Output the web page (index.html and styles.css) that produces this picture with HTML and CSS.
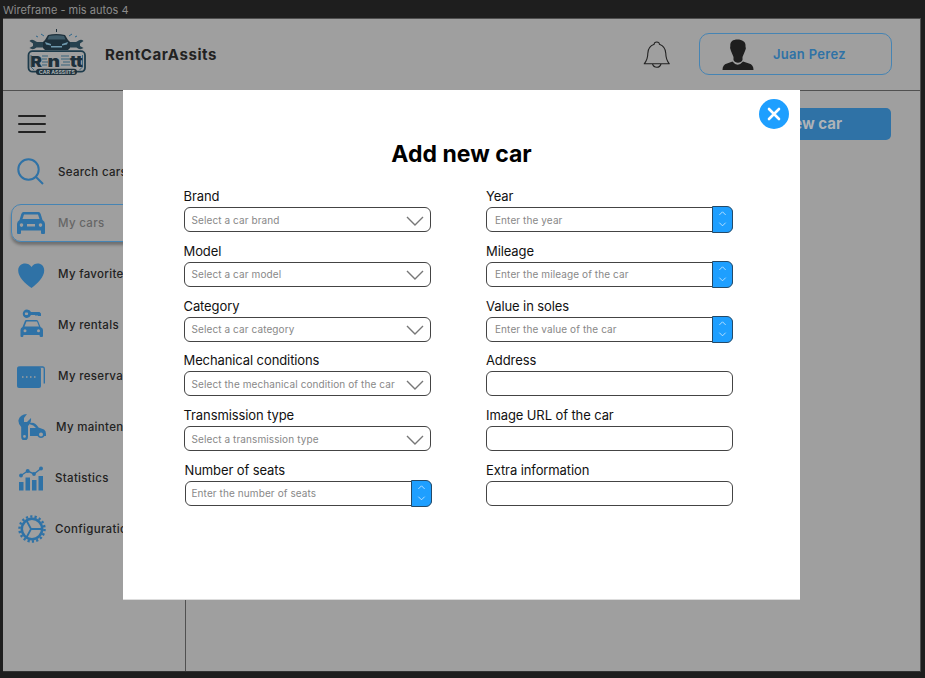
FILE: index.html
```html
<!DOCTYPE html>
<html lang="en">
<head>
<meta charset="utf-8">
<title>RentCarAssits</title>
<link rel="stylesheet" href="styles.css">
</head>
<body>
<div class="frame-title">Wireframe - mis autos 4</div>
<div class="app">
  <header class="header">
    <svg class="logo" width="60" height="48" viewBox="0 0 60 48">
      <path d="M29 1h1v3h-1z" fill="#1d303b"/>
      <path d="M9 13.500Q5 10.500 2.500 13L6 15.500V18L2.500 20Q6 22.500 9.500 19.500H18V14H10ZM50 13.500Q54 10.500 56.500 13L53 15.500V18L56.500 20Q53 22.500 49.500 19.500H41V14H49Z" fill="#27424f"/>
      <path d="M21 7Q29 5 38 7L41 12 43 14V20L41 22H18L16 20V14L18 12Z" fill="#1d303b"/>
      <path d="M22 8Q29 6.500 37 8L38.500 11.500H20.500Z" fill="#3f5b69"/>
      <path d="M18 14l6 2v1.500l-5-1ZM41 14l-6 2v1.500l5-1ZM24 18h11v1.500h-11Z" fill="#6e98ad"/>
      <path d="M14 6l3 2M9 8l2 1M45 6l-3 2M50 8l-2 1" stroke="#2c668b"/>
      <rect x="1.500" y="23.200" width="56.500" height="20.500" rx="4" fill="none" stroke="#1d3b4b" stroke-width="1.800"/>
      <path d="M4 27v12l3 3M55.500 27v12l-3 3" fill="none" stroke="#38647d"/>
      <path d="M15 28h6M15 31h5M15 34h6M15 37h5M34 28h8M34 31h9M36 34h7M34 37h9" fill="none" stroke="#38647d" stroke-width="1.100"/>
      <text x="3.500" y="38.500" class="logo-main" textLength="11.500" lengthAdjust="spacingAndGlyphs">R</text>
      <text x="20.500" y="38.500" class="logo-main" textLength="12.500" lengthAdjust="spacingAndGlyphs">n</text>
      <text x="43" y="38.500" class="logo-main" textLength="13" lengthAdjust="spacingAndGlyphs">tt</text>
      <rect x="9" y="40.700" width="41" height="6.300" rx="3" fill="#1d303b"/>
      <text x="12" y="45.700" class="logo-sub" textLength="36" lengthAdjust="spacingAndGlyphs">CAR ASSSIITS</text>
    </svg>
    <h1 class="brand">RentCarAssits</h1>
    <svg class="bell" width="28" height="28" viewBox="0 0 28 28" fill="none" stroke="#222" stroke-width="1.1" stroke-linejoin="round">
      <path d="M11.2 3.3Q11.2 1 13.8 1T16.4 3.3Q22.500 5.500 22.800 12.500Q22.800 18.500 26.300 22.800H1.200Q4.800 18.500 4.800 12.500Q5 5.500 11.200 3.300ZM9.500 23Q10.500 26.200 13.800 26.200T18 23"/>
    </svg>
    <div class="user">
      <svg width="32" height="32" viewBox="0 0 32 32" fill="#1e1e1e">
        <path d="M8.300 7C8 2.500 11 .5 15.500 .5S24 2.500 23.500 7.500Q24.500 9 23 12L20.500 18V21C19 24.500 13 24.500 11.500 21V18L9 12Q7.500 9 8.300 7Z"/>
        <path d="M.5 31Q.5 25.500 5 24.500L10.500 22.500Q15.500 29 21 22.500L27 24.500Q31.500 25.500 31.500 31Z"/>
      </svg>
      <span>Juan Perez</span>
    </div>
  </header>
  <div class="body">
    <nav class="sidebar">
      <div class="burger"><i></i><i></i><i></i></div>
      <a class="item"><svg width="28" height="28" viewBox="0 0 28 28" fill="none" stroke="#2f72a6" stroke-width="2"><circle cx="11.500" cy="11.500" r="10.200"/><path d="M18.500 18.500L26 26"/></svg><span>Search cars</span></a>
      <a class="item active"><svg width="28" height="24" viewBox="0 0 28 24"><path fill="#2f72a6" fill-rule="evenodd" d="M6.500 1H21.500Q23 1 23.700 3L25.500 9Q28 10.500 28 13V22Q28 23 27 23H25Q24 23 24 22V19.500H4V22Q4 23 3 23H1Q0 23 0 22V13Q0 10.500 2.500 9L4.300 3Q5 1 6.500 1ZM7 3.500L5.500 8H22.500L21 3.500ZM4.500 12.300A1.800 1.800 0 1 0 4.500 15.900A1.800 1.800 0 1 0 4.500 12.300ZM23.500 12.300A1.800 1.800 0 1 0 23.500 15.900A1.800 1.800 0 1 0 23.500 12.300ZM10 13V15.500H18V13Z"/></svg><span>My cars</span></a>
      <a class="item heart"><svg width="28" height="26" viewBox="0 0 28 26"><path fill="#2f72a6" d="M14.500 25C8 20.500 1.200 14 1.200 7.500C1.200-.5 11-1.500 14.500 4C18-1.500 27.200-.5 27.200 7.500C27.200 14 20.500 20.500 14.500 25Z"/></svg><span>My favorites</span></a>
      <a class="item rentals"><svg width="28" height="30" viewBox="0 0 28 30"><g fill="#2f72a6" fill-rule="evenodd"><path d="M10 1.500Q13 1.500 14 4H22.500L24 5.500V8H21L20 7L19 8L18 7H14Q12.500 10 10 10A4.200 4.200 0 0 1 10 1.500ZM9.500 4.500A1.300 1.300 0 1 0 9.500 7A1.300 1.300 0 1 0 9.500 4.500Z"/><path d="M9 12H19.500Q21 12 21.500 14L23.500 19Q26 20 26 22V28Q26 29 25 29H23.500Q22.500 29 22.500 27H6.500Q6.500 29 5.500 29H4.500Q3.500 29 3.500 28V22Q3.500 20 5.500 19L7.500 14Q8 12 9 12ZM9.500 13.500L7.500 18.500H22L20 13.500ZM8 21.200A1.500 1.500 0 1 0 8 24.200A1.500 1.500 0 1 0 8 21.200ZM21.500 21.200A1.500 1.500 0 1 0 21.500 24.200A1.500 1.500 0 1 0 21.500 21.200Z"/></g></svg><span>My rentals</span></a>
      <a class="item low"><svg width="28" height="22" viewBox="0 0 28 22"><rect y="1" width="24" height="21" rx="2" fill="#2f72a6"/><path d="M1 3V2Q1 1 3 1H26Q27.300 1 27.300 3V17.500" fill="none" stroke="#2f72a6" stroke-width="1.400"/><path d="M24.800 4V17" stroke="#9f9f9f" stroke-width="1.700"/><path d="M5 11h1.500m2.500 0h1.500m2.500 0h1.500m2.500 0h1.500" stroke="#9f9f9f" stroke-width="1.500"/></svg><span>My reservations</span></a>
      <a class="item maint"><svg width="28" height="26" viewBox="0 0 28 26"><g fill="#2f72a6" fill-rule="evenodd"><path d="M9 0L6 4V8H9L13 4Q13.500 9 10 12V23A3.300 3.300 0 0 1 3.200 23V13Q0 10 .5 6Q2 .5 9 0ZM6.500 21A1.400 1.400 0 1 0 6.500 23.800A1.400 1.400 0 1 0 6.500 21Z"/><path d="M12 9Q17 7.500 20.500 13.500L26 15.500Q28 16.500 28 20V22H26.500A4 4 0 0 1 19.500 22H12V14H18Q15 10 12 10.500ZM23 18.500A2 2 0 1 0 23 22.500A2 2 0 1 0 23 18.500Z"/></g></svg><span>My maintenance</span></a>
      <a class="item stats"><svg width="28" height="26" viewBox="0 0 28 26"><g fill="#2f72a6"><rect x="1" y="17" width="4.500" height="8.500"/><rect x="7.500" y="12.500" width="4.500" height="13"/><rect x="14" y="15" width="4.500" height="10.500"/><rect x="20.500" y="11" width="4.500" height="14.500"/><circle cx="3" cy="10.500" r="1.900"/><circle cx="9.700" cy="6" r="2"/><circle cx="16" cy="9" r="1.900"/><circle cx="23" cy="3.500" r="2"/></g><path d="M3 10.500L9.700 6L16 9L23 3.500" fill="none" stroke="#2f72a6" stroke-width="1.400"/></svg><span>Statistics</span></a>
      <a class="item stats"><svg width="28" height="28" viewBox="0 0 28 28" fill="none" stroke="#2f72a6"><circle cx="14" cy="14" r="12.500" stroke-width="2.500" stroke-dasharray="2.200 2.163"/><circle cx="14" cy="14" r="10.200" stroke-width="2.500"/><path d="M13 14L8.500 5.500M13 14L8.500 22.500M12.500 14H24" stroke-width="1.800"/></svg><span>Configuration</span></a>
    </nav>
    <main class="content"><button class="add">Add new car</button></main>
  </div>
</div>

<section class="modal">
  <button class="close"><svg width="30" height="30" viewBox="0 0 30 30"><path d="M10 10L20 20M20 10L10 20" stroke="#fff" stroke-width="2.600" stroke-linecap="round"/></svg></button>
  <h2>Add new car</h2>
  <div class="form">
    <div class="col">
      <div class="field"><label>Brand</label><div class="box"><span>Select a car brand</span><svg class="chev" viewBox="0 0 18 10"><path d="M1 1L9 9L17 1"/></svg></div></div>
      <div class="field"><label>Model</label><div class="box"><span>Select a car model</span><svg class="chev" viewBox="0 0 18 10"><path d="M1 1L9 9L17 1"/></svg></div></div>
      <div class="field"><label>Category</label><div class="box"><span>Select a car category</span><svg class="chev" viewBox="0 0 18 10"><path d="M1 1L9 9L17 1"/></svg></div></div>
      <div class="field"><label>Mechanical conditions</label><div class="box"><span>Select the mechanical condition of the car</span><svg class="chev" viewBox="0 0 18 10"><path d="M1 1L9 9L17 1"/></svg></div></div>
      <div class="field"><label>Transmission type</label><div class="box"><span>Select a transmission type</span><svg class="chev" viewBox="0 0 18 10"><path d="M1 1L9 9L17 1"/></svg></div></div>
      <div class="field seats"><label>Number of seats</label><div class="box"><span>Enter the number of seats</span><svg class="spin" viewBox="0 0 21 26"><path d="M7 8L10.500 4.500L14 8M7 16.500L10.500 20L14 16.500"/></svg></div></div>
    </div>
    <div class="col right">
      <div class="field"><label>Year</label><div class="box"><span>Enter the year</span><svg class="spin" viewBox="0 0 21 26"><path d="M7 8L10.500 4.500L14 8M7 16.500L10.500 20L14 16.500"/></svg></div></div>
      <div class="field"><label>Mileage</label><div class="box"><span>Enter the mileage of the car</span><svg class="spin" viewBox="0 0 21 26"><path d="M7 8L10.500 4.500L14 8M7 16.500L10.500 20L14 16.500"/></svg></div></div>
      <div class="field"><label>Value in soles</label><div class="box"><span>Enter the value of the car</span><svg class="spin" viewBox="0 0 21 26"><path d="M7 8L10.500 4.500L14 8M7 16.500L10.500 20L14 16.500"/></svg></div></div>
      <div class="field"><label>Address</label><div class="box"></div></div>
      <div class="field"><label>Image URL of the car</label><div class="box"></div></div>
      <div class="field"><label>Extra information</label><div class="box"></div></div>
    </div>
  </div>
</section>
</body>
</html>
```
FILE: styles.css
```css
* { box-sizing: border-box; }
body { margin: 0; width: 925px; height: 678px; overflow: hidden; background: #1e1e1e; font-family: Inter, sans-serif; position: relative; }
button { border: 0; padding: 0; font-family: inherit; }
.frame-title { height: 18px; padding: 3px 0 0 3px; font-size: 11px; line-height: 14px; color: #8b8b8b; }
.app { width: 918px; height: 654px; margin-left: 3px; background: #9f9f9f; border-top: 1px solid #505050; border-right: 1px solid #505050; border-bottom: 1px solid #333; display: flex; flex-direction: column; }
.header { height: 72px; flex: none; border-bottom: 1px solid #505050; display: flex; align-items: center; }
.logo { margin: -6px 0 0 24px; flex: none; }
.logo-main { font: 900 15px Inter, sans-serif; fill: #1d303b; }
.logo-sub { font: 700 5px Inter, sans-serif; fill: #a7b0b3; }
.brand { margin: 0 0 0 18px; width: 538px; font: 700 15px/20px Inter, sans-serif; letter-spacing: .58px; color: #222; }
.bell { flex: none; }
.user { margin: -2px 0 0 28px; width: 193px; height: 42px; flex: none; border: 1px solid #4684b3; border-radius: 10px; display: flex; align-items: center; padding-left: 22px; gap: 19px; color: #2f72a6; font-size: 13px; font-weight: 600; letter-spacing: .3px; }
.user svg { margin-top: 2px; }
.body { flex: 1; display: flex; }
.sidebar { width: 183px; border-right: 1px solid #505050; padding-top: 24px; }
.burger { margin: 0 0 20px 15px; width: 28px; height: 18px; display: flex; flex-direction: column; justify-content: space-between; }
.burger i { height: 2px; border-radius: 1px; background: #222; }
.item { height: 38px; margin: 0 0 13px 8px; padding-left: 5px; display: flex; align-items: center; gap: 13px; color: #222; font-size: 11.5px; font-weight: 500; letter-spacing: .32px; white-space: nowrap; border: 1px solid transparent; overflow: hidden; }
.item svg { flex: none; }
.active { padding-left: 5px; border-color: #4684b3; border-radius: 10px; box-shadow: 0 3px 3px rgba(0, 0, 0, .3); color: #666; }
.heart svg { margin-top: 4px; }
.rentals svg { margin-top: -4px; }
.low svg { margin-top: 2px; }
.maint { gap: 10px; padding-left: 6px; }
.stats { gap: 9px; padding-left: 6px; }
.content { flex: 1; display: flex; justify-content: flex-end; padding: 17px 29px 0 0; }
.add { width: 180px; height: 32px; border-radius: 5px; background: #2f72a6; color: #aeb3b7; font-size: 15px; font-weight: 700; padding: 0 49px 1px 0; text-align: right; }
.modal { position: absolute; left: 123px; top: 90px; width: 677px; height: 510px; background: #fff; border-bottom: 1px solid #ddd; }
.close { display: block; margin: 9px 11px 0 auto; width: 30px; height: 30px; border-radius: 50%; background: #1e9fff; }
.close svg { display: block; }
h2 { margin: 10px 0 0; font-size: 23px; line-height: 30px; font-weight: 700; text-align: center; color: #000; }
.form { display: flex; gap: 55.5px; padding: 18px 0 0 60.5px; }
.col { width: 247px; }
.field { height: 54.8px; }
.field label { display: block; height: 20px; padding-top: 1px; font-size: 13px; line-height: 17px; letter-spacing: -.1px; color: #111; }
.box { height: 25px; border: 1px solid #444; border-radius: 6px; padding-left: 7px; display: flex; align-items: center; justify-content: space-between; font-size: 10px; letter-spacing: .1px; color: #888; }
.chev { width: 18px; height: 10px; margin: 2px 6px 0 0; fill: none; stroke: #777; stroke-width: 1.4; }
.spin { width: 21px; height: 27px; margin: -1px; flex: none; background: #1e9fff; border: 1px solid #244a68; border-radius: 0 6px 6px 0; fill: none; stroke: #d4ecff; stroke-width: .9; }
.right .box { padding-left: 8px; }
.seats { margin: 0 -1px 0 1px; }
.seats .box { padding-left: 6px; }
```
